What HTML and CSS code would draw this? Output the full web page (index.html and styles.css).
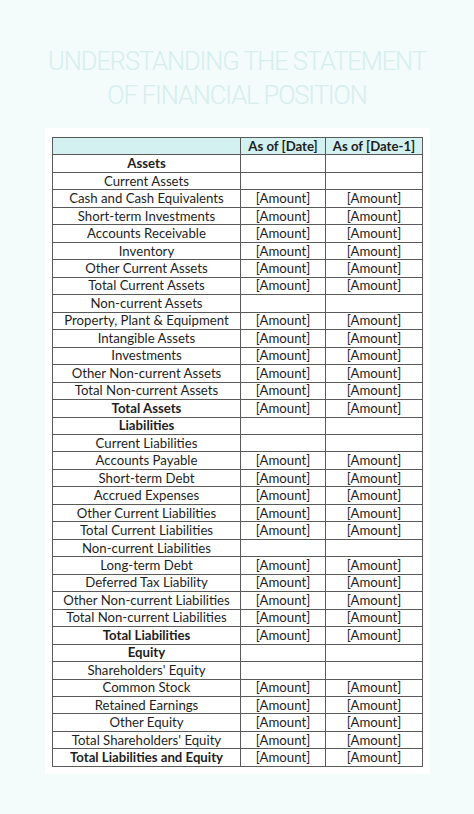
FILE: index.html
```html
<!DOCTYPE html>
<html>
<head>
<meta charset="utf-8">
<link rel="stylesheet" href="styles.css">
</head>
<body>
<div class="page">
  <h1 class="title">UNDERSTANDING THE STATEMENT<br>OF FINANCIAL POSITION</h1>
  <div class="panel">
    <table class="sheet">
      <colgroup><col class="c1"><col class="c2"><col class="c3"></colgroup>
      <thead>
        <tr class="head"><th></th><th>As of [Date]</th><th>As of [Date-1]</th></tr>
      </thead>
      <tbody>
        <tr class="b"><td>Assets</td><td></td><td></td></tr>
        <tr><td>Current Assets</td><td></td><td></td></tr>
        <tr><td>Cash and Cash Equivalents</td><td>[Amount]</td><td>[Amount]</td></tr>
        <tr><td>Short-term Investments</td><td>[Amount]</td><td>[Amount]</td></tr>
        <tr><td>Accounts Receivable</td><td>[Amount]</td><td>[Amount]</td></tr>
        <tr><td>Inventory</td><td>[Amount]</td><td>[Amount]</td></tr>
        <tr><td>Other Current Assets</td><td>[Amount]</td><td>[Amount]</td></tr>
        <tr><td>Total Current Assets</td><td>[Amount]</td><td>[Amount]</td></tr>
        <tr><td>Non-current Assets</td><td></td><td></td></tr>
        <tr><td>Property, Plant &amp; Equipment</td><td>[Amount]</td><td>[Amount]</td></tr>
        <tr><td>Intangible Assets</td><td>[Amount]</td><td>[Amount]</td></tr>
        <tr><td>Investments</td><td>[Amount]</td><td>[Amount]</td></tr>
        <tr><td>Other Non-current Assets</td><td>[Amount]</td><td>[Amount]</td></tr>
        <tr><td>Total Non-current Assets</td><td>[Amount]</td><td>[Amount]</td></tr>
        <tr class="b"><td>Total Assets</td><td>[Amount]</td><td>[Amount]</td></tr>
        <tr class="b"><td>Liabilities</td><td></td><td></td></tr>
        <tr><td>Current Liabilities</td><td></td><td></td></tr>
        <tr><td>Accounts Payable</td><td>[Amount]</td><td>[Amount]</td></tr>
        <tr><td>Short-term Debt</td><td>[Amount]</td><td>[Amount]</td></tr>
        <tr><td>Accrued Expenses</td><td>[Amount]</td><td>[Amount]</td></tr>
        <tr><td>Other Current Liabilities</td><td>[Amount]</td><td>[Amount]</td></tr>
        <tr><td>Total Current Liabilities</td><td>[Amount]</td><td>[Amount]</td></tr>
        <tr><td>Non-current Liabilities</td><td></td><td></td></tr>
        <tr><td>Long-term Debt</td><td>[Amount]</td><td>[Amount]</td></tr>
        <tr><td>Deferred Tax Liability</td><td>[Amount]</td><td>[Amount]</td></tr>
        <tr><td>Other Non-current Liabilities</td><td>[Amount]</td><td>[Amount]</td></tr>
        <tr><td>Total Non-current Liabilities</td><td>[Amount]</td><td>[Amount]</td></tr>
        <tr class="b"><td>Total Liabilities</td><td>[Amount]</td><td>[Amount]</td></tr>
        <tr class="b"><td>Equity</td><td></td><td></td></tr>
        <tr><td>Shareholders' Equity</td><td></td><td></td></tr>
        <tr><td>Common Stock</td><td>[Amount]</td><td>[Amount]</td></tr>
        <tr><td>Retained Earnings</td><td>[Amount]</td><td>[Amount]</td></tr>
        <tr><td>Other Equity</td><td>[Amount]</td><td>[Amount]</td></tr>
        <tr><td>Total Shareholders' Equity</td><td>[Amount]</td><td>[Amount]</td></tr>
        <tr class="b"><td>Total Liabilities and Equity</td><td>[Amount]</td><td>[Amount]</td></tr>
      </tbody>
    </table>
  </div>
</div>
</body>
</html>
```
FILE: styles.css
```css
html, body {
  margin: 0;
  padding: 0;
  background: #f3fbfb;
}
.page {
  width: 474px;
  height: 814px;
  overflow: hidden;
  display: flex;
  flex-direction: column;
}
.title {
  margin: 44px 0 0 0;
  font-family: Roboto, "Open Sans", sans-serif;
  font-weight: 300;
  font-size: 25.5px;
  line-height: 34px;
  color: #d6eeed;
  text-align: center;
  letter-spacing: -1.1px;
}
.panel {
  margin: 16px 0 0 45px;
  width: 385px;
  height: 646px;
  box-sizing: border-box;
  padding: 9px 8px 8px 7px;
  background: #ffffff;
}
.sheet {
  border-collapse: collapse;
  width: 370px;
  table-layout: fixed;
  font-family: Lato, "Noto Sans", sans-serif;
  font-size: 13.2px;
  color: #1e1e1e;
}
.c1 { width: 188px; }
.c2 { width: 85px; }
.c3 { width: 97px; }
.sheet th, .sheet td {
  border: 1px solid #5a5a5a;
  height: 16.47px;
  padding: 0;
  text-align: center;
  vertical-align: middle;
  line-height: 15px;
  white-space: nowrap;
  overflow: hidden;
}
.sheet .head th {
  background: #d3f1f1;
  font-weight: 700;
}
.sheet .b td:first-child {
  font-weight: 700;
}
```
